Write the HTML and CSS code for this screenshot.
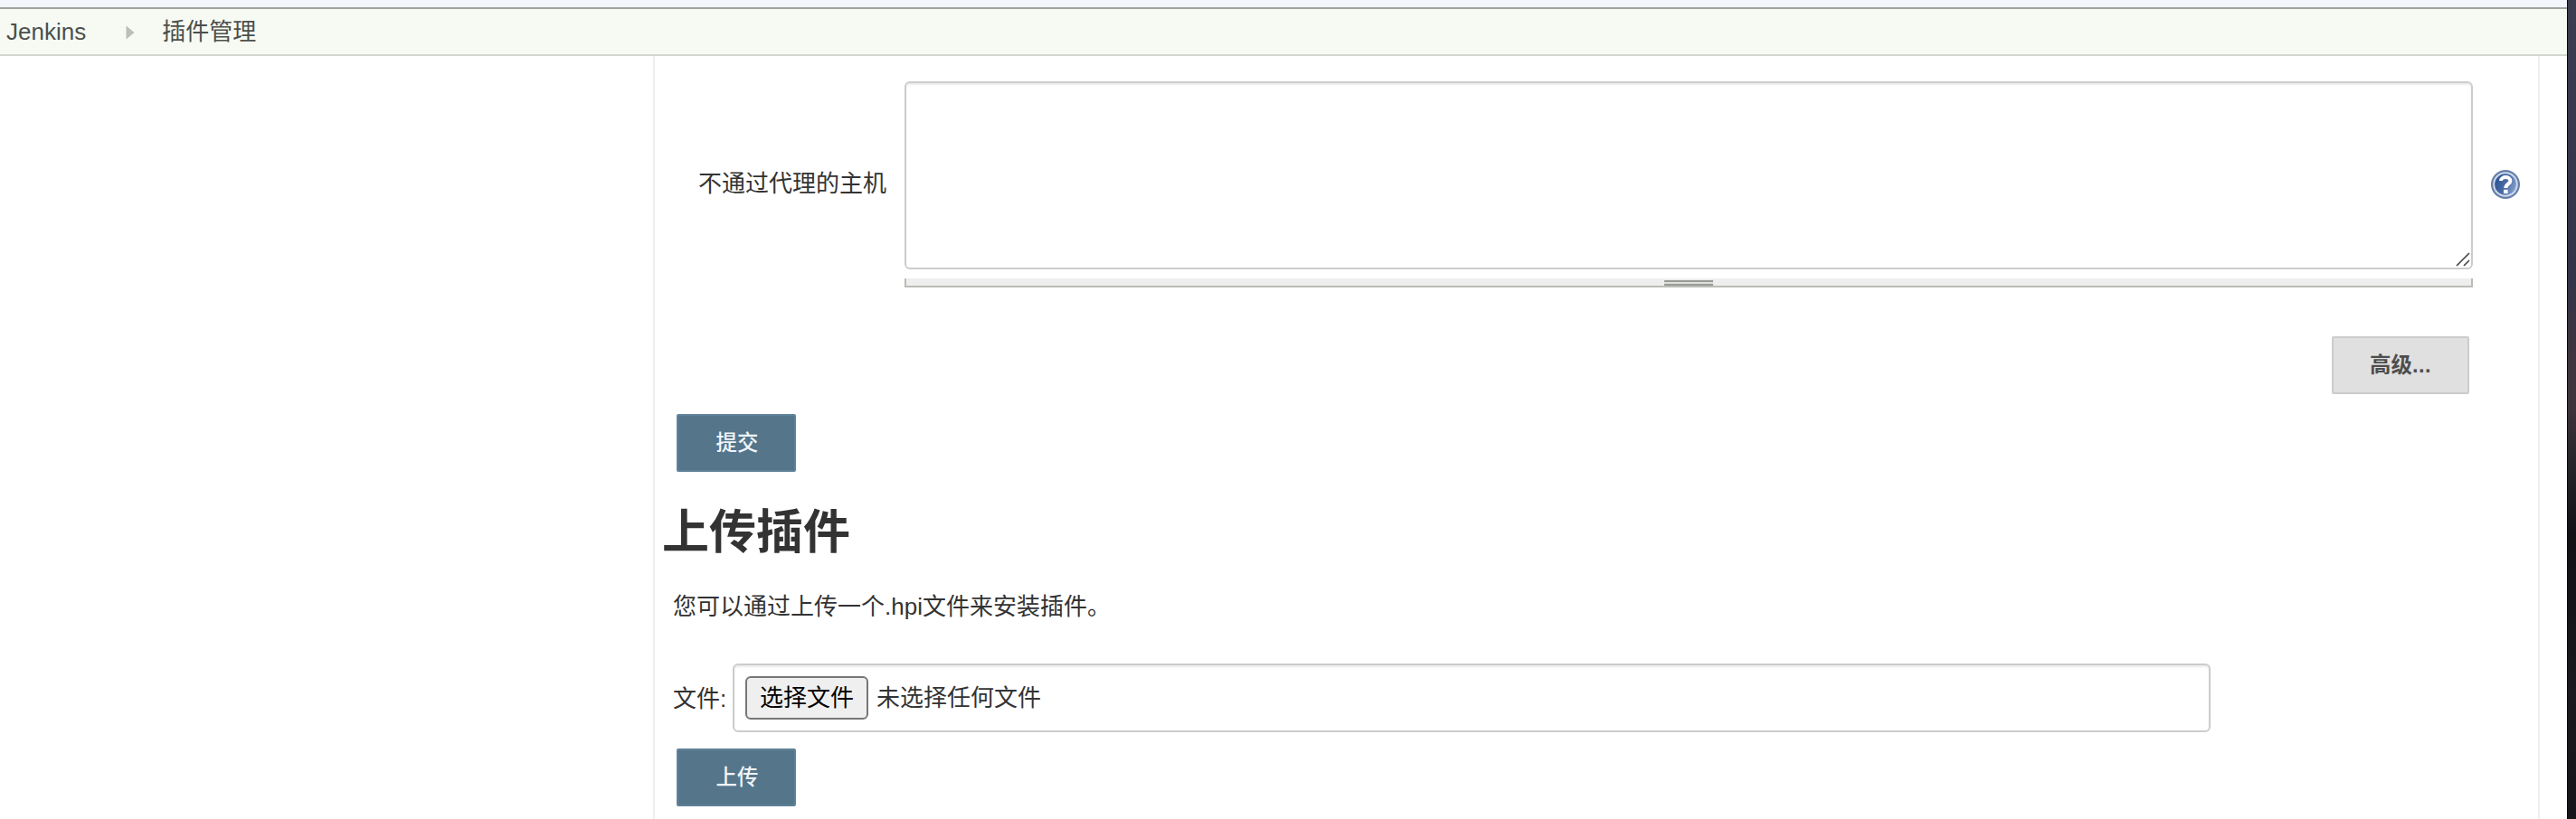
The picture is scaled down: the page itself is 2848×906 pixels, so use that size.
FILE: index.html
```html
<!DOCTYPE html>
<html lang="zh-CN">
<head>
<meta charset="utf-8">
<title>插件管理</title>
<link rel="stylesheet" href="styles.css">
</head>
<body>
<div class="window">
  <div class="header-strip"></div>
  <nav class="breadcrumbs">
    <span class="crumb">Jenkins</span>
    <svg class="crumb-arrow" width="10" height="16" viewBox="0 0 10 16"><path d="M0.5 0.5v15L9.5 8z" fill="#babdb8"/></svg>
    <span class="crumb">插件管理</span>
  </nav>
  <div class="page">
    <aside class="side"></aside>
    <main class="main">
      <div class="proxy-row">
        <label class="proxy-label">不通过代理的主机</label>
        <div class="proxy-field">
          <div class="textarea">
            <svg class="resizer" width="16" height="16" viewBox="0 0 16 16"><path d="M1 15L15 1M9 15L15 9" stroke="#444" stroke-width="1.6" fill="none"/></svg>
          </div>
          <div class="handle"><div class="grip"></div></div>
        </div>
        <svg class="help" width="32" height="32" viewBox="0 0 32 32">
          <defs><linearGradient id="helpFill" x1="0" y1="0.3" x2="1" y2="0.7"><stop offset="0" stop-color="#2c5190"/><stop offset="0.5" stop-color="#4a6ca6"/><stop offset="1" stop-color="#8ba4cc"/></linearGradient></defs>
          <circle cx="16" cy="16" r="16" fill="#667fa8"/>
          <circle cx="16" cy="16" r="12.8" fill="url(#helpFill)" stroke="#cbd8eb" stroke-width="2"/>
          <path d="M11 12C11 6.8 21.4 6.8 21.4 12C21.4 15.5 16.3 15.5 16.3 20" fill="none" stroke="#fff" stroke-width="4"/>
          <rect x="14" y="21.8" width="4.6" height="4.2" fill="#fff"/>
        </svg>
      </div>
      <div class="advanced-row"><button class="btn btn-grey">高级<span class="dots">...</span></button></div>
      <button class="btn btn-primary">提交</button>
      <h1 class="title">上传插件</h1>
      <p class="desc">您可以通过上传一个.hpi文件来安装插件。</p>
      <div class="file-row">
        <span class="file-label">文件:</span>
        <div class="file-input"><button class="choose">选择文件</button><span>未选择任何文件</span></div>
      </div>
      <button class="btn btn-primary">上传</button>
    </main>
  </div>
</div>
<div class="desktop-edge"></div>
</body>
</html>
```
FILE: styles.css
```css
* { box-sizing: border-box; }
body {
  margin: 0;
  height: 906px;
  overflow: hidden;
  display: flex;
  background: #fff;
  color: #333;
  font: 26px/36px "Liberation Sans", "Noto Sans CJK SC", sans-serif;
}
.window { width: 2838px; height: 906px; display: flex; flex-direction: column; }
.desktop-edge {
  width: 10px;
  border-left: 1px solid #000;
  background: linear-gradient(#3c3d50 0, #33344a 300px, #40343f 400px, #40343c 450px, #2a282c 500px, #111013 595px, #1a191f 760px, #161518 100%);
}
.header-strip { height: 10px; background: #f3f6fb; border-bottom: 2px solid #a0a3a0; }
.breadcrumbs {
  height: 52px;
  display: flex;
  align-items: center;
  padding-left: 7px;
  background: #f6faf2;
  border-bottom: 2px solid #d3d7cf;
  color: #4d4f4b;
}
.crumb-arrow { margin: 2px 30px 0 44px; }
.page { flex: 1; display: flex; }
.side { width: 722px; }
.main {
  width: 2086px;
  border-left: 2px solid #eee;
  border-right: 2px solid #eee;
  padding: 28px 0 0 10px;
}
.proxy-row { display: flex; height: 228px; }
.proxy-label { width: 266px; padding: 95px 0 0 38px; white-space: nowrap; }
.proxy-field { width: 1734px; }
.textarea {
  position: relative;
  height: 208px;
  border: 2px solid #ccc;
  border-radius: 6px;
  box-shadow: inset 0 2px 2px rgba(0, 0, 0, 0.075);
}
.resizer { position: absolute; right: 1px; bottom: 1px; }
.handle {
  height: 10px;
  margin-top: 10px;
  padding-top: 2px;
  background: #eee;
  border: 2px solid #babdb6;
  border-top: 0;
}
.grip {
  width: 54px;
  height: 6px;
  margin: 0 auto;
  background: #dde0da;
  border: solid #999c96;
  border-width: 2px 0;
}
.help { margin: 98px 0 0 20px; }
.advanced-row { display: flex; justify-content: flex-end; margin: 54px 76px 22px 0; }
.btn {
  display: block;
  height: 64px;
  padding: 0;
  border-radius: 2px;
  font: 500 23.4px/32px "Liberation Sans", "Noto Sans CJK SC", sans-serif;
}
.btn-grey { width: 152px; background: #e0e0e0; border: 2px solid #ccc; color: #4d4d4d; font-weight: bold; }
.dots { letter-spacing: 0.5px; }
.btn-primary { width: 132px; margin-left: 14px; padding-left: 2px; background: #54758a; border: 2px solid #5f8299; color: #f0f5fa; }
.title { margin: 31px 0 0 -2px; font-size: 52px; line-height: 72px; font-weight: bold; }
.desc { margin: 28px 0 0 10px; }
.file-row { display: flex; align-items: center; margin: 45px 0 18px 10px; }
.file-label { width: 66px; padding-top: 1px; }
.file-input {
  width: 1634px;
  height: 76px;
  display: flex;
  align-items: center;
  gap: 9px;
  padding-left: 12px;
  border: 2px solid #ccc;
  border-radius: 6px;
  box-shadow: inset 0 2px 2px rgba(0, 0, 0, 0.075);
}
.choose {
  width: 136px;
  height: 48px;
  padding: 0;
  border: 2px solid #767676;
  border-radius: 6px;
  background: #efefef;
  color: #000;
  font: inherit;
}
```
